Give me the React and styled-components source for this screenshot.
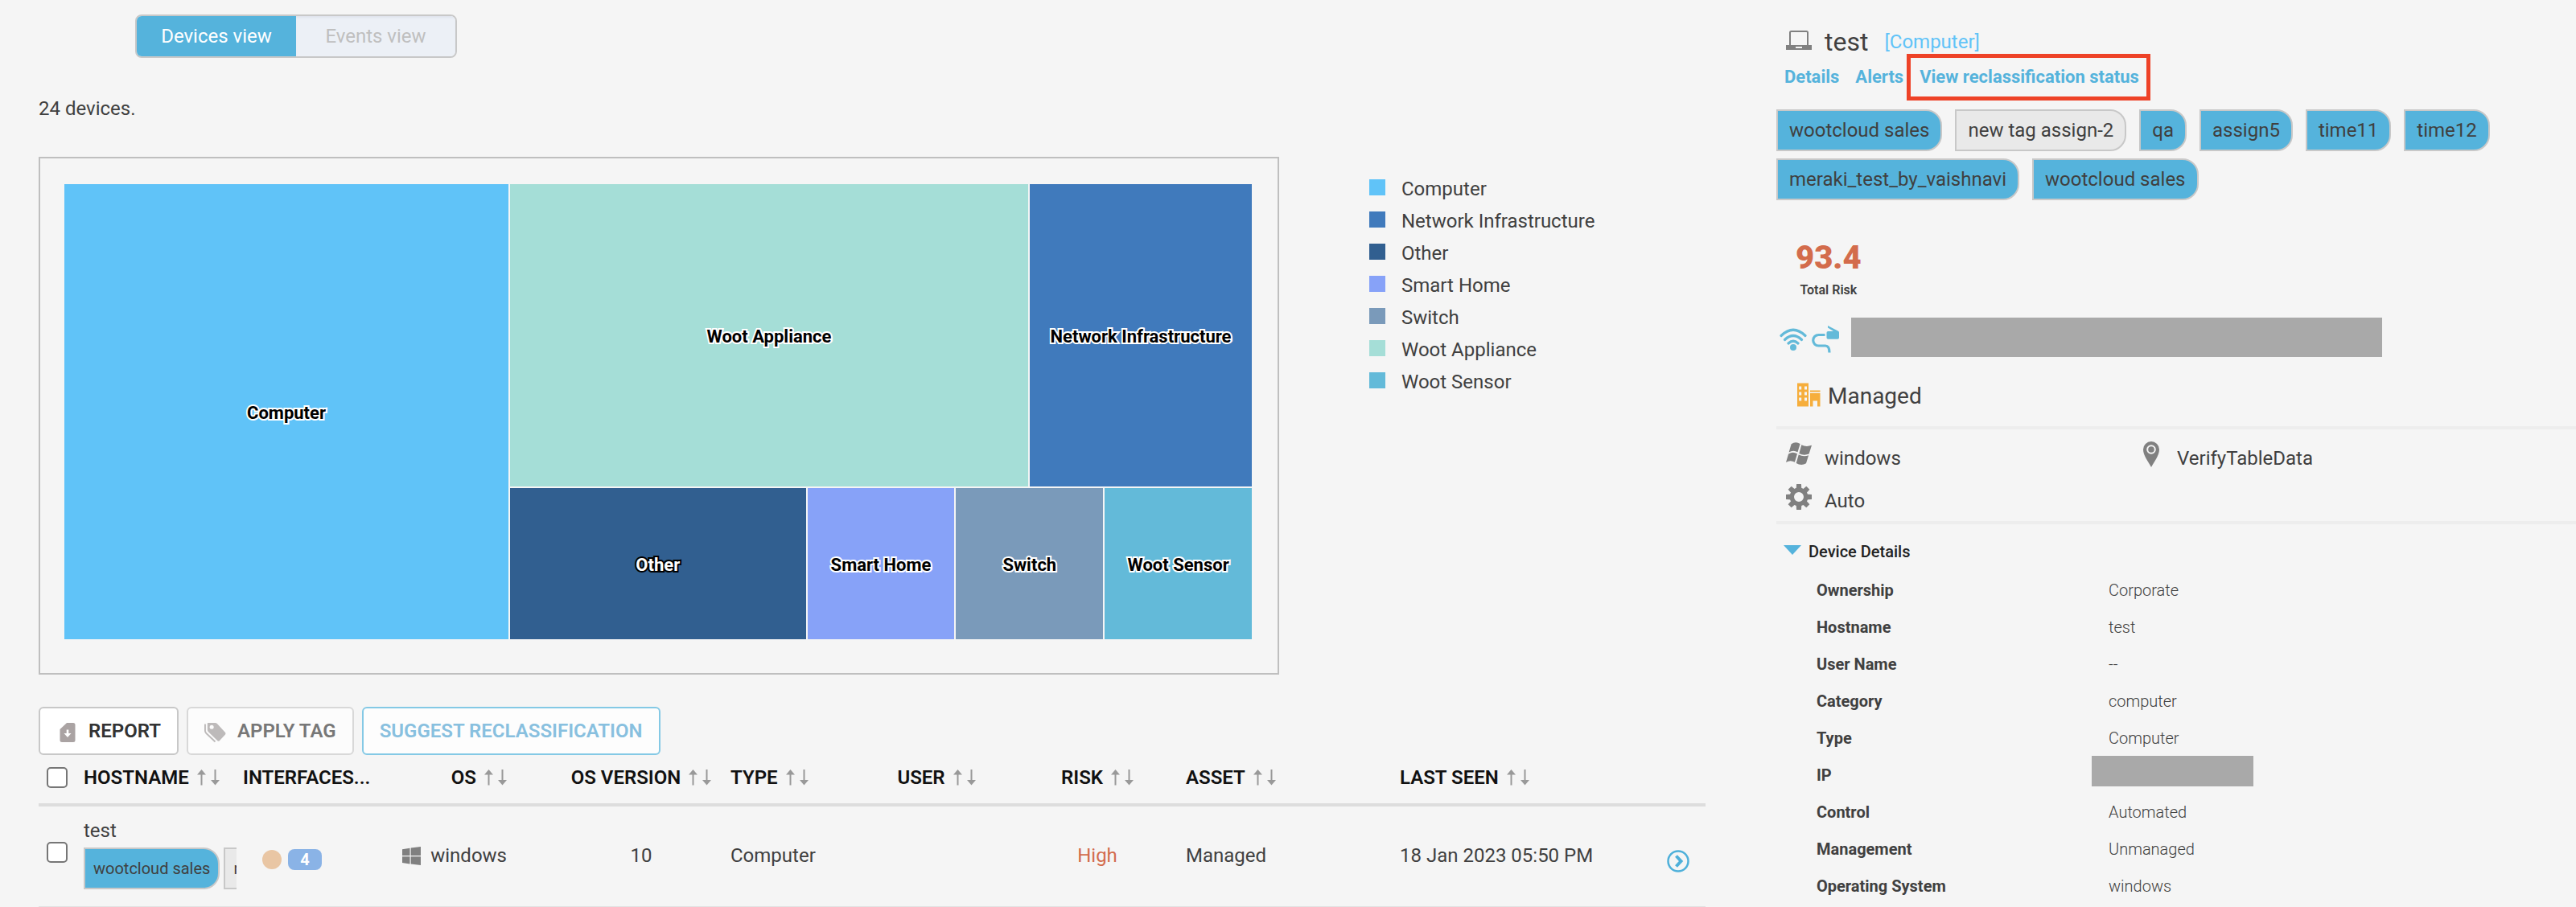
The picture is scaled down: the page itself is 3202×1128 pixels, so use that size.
import React from "react";
import styled, { createGlobalStyle } from "styled-components";

const Global = createGlobalStyle`
  *, *::before, *::after { box-sizing: border-box; }
  body {
    margin: 0;
    background: #f5f5f5;
    color: #404040;
    font-family: Roboto, "Liberation Sans", sans-serif;
    font-size: 24px;
    line-height: 28px;
  }
  button, input { font: inherit; }
  svg { display: block; flex: none; }
`;

const Page = styled.div`
  display: grid;
  grid-template-columns: minmax(0, 2208fr) minmax(0, 994fr);
`;

const Main = styled.main`
  padding: 18px 88px 0 48px;
`;

const Toggle = styled.div`
  display: flex;
  width: fit-content;
  margin-left: 120px;
  height: 54px;
  border: 2px solid #c8c8c8;
  border-radius: 8px;
  overflow: hidden;
`;

const ToggleButton = styled.button`
  width: 198px;
  padding: 0;
  border: 0;
  color: ${(p) => (p.$active ? "#fff" : "#bfbfbf")};
  background: ${(p) => (p.$active ? "#55b3dc" : "#ecf0f6")};
  box-shadow: ${(p) => (p.$active ? "none" : "inset 0 3px 3px -1px #dfe3ec")};
`;

const Count = styled.p`
  margin: 49px 0 46px;
`;

const ChartRow = styled.div`
  display: flex;
  gap: 112px;
  align-items: flex-start;
`;

const ChartFrame = styled.div`
  flex: 1;
  min-width: 0;
  padding: 32px 32px 42px 30px;
  border: 2px solid #bfbfbf;
`;

const Treemap = styled.div`
  display: flex;
  gap: 2px;
  height: 566px;
`;

const Stack = styled.div`
  display: flex;
  flex-direction: column;
  gap: 2px;
  flex: 922 1 0;
  min-width: 0;
`;

const Band = styled.div`
  display: flex;
  gap: 2px;
  flex: ${(p) => p.$size} 1 0;
`;

const Cell = styled.div`
  display: flex;
  align-items: center;
  justify-content: center;
  flex: ${(p) => p.$size} 1 0;
  min-width: 0;
  padding-top: 4px;
  background: ${(p) => p.$color};
`;

const CellLabel = styled.span`
  color: ${(p) => (p.$inverse ? "#fff" : "#000")};
  font-size: 22px;
  font-weight: 700;
  white-space: nowrap;
  paint-order: stroke fill;
  -webkit-text-stroke: 4px ${(p) => (p.$inverse ? "#000" : "#fff")};
`;

const Legend = styled.ul`
  width: 418px;
  margin: 26px 0 0;
  padding: 0;
  list-style: none;
`;

const LegendItem = styled.li`
  display: flex;
  gap: 20px;
  height: 40px;
`;

const Swatch = styled.span`
  width: 20px;
  height: 20px;
  margin-top: 2px;
  background: ${(p) => p.$color};
`;

const Actions = styled.div`
  display: flex;
  gap: 10px;
  margin-top: 40px;
`;

const variants = {
  solid: "color:#333; background:#fff; border-color:#c8c8c8;",
  muted: "color:#777; background:#fcfcfc; border-color:#d8d8d8;",
  outline: "color:#88c0df; background:#fdfdfd; border-color:#84c9e5;",
};

const ActionButton = styled.button`
  display: flex;
  align-items: center;
  gap: 14px;
  height: 60px;
  padding: 0 20px;
  border: 2px solid;
  border-radius: 6px;
  font-weight: 600;
  white-space: nowrap;
  ${(p) => variants[p.$variant]}
  svg { margin-top: 4px; }
`;

const Table = styled.table`
  width: 100%;
  margin-top: 2px;
  table-layout: fixed;
  border-collapse: separate;
  border-spacing: 0;
`;

const Th = styled.th`
  height: 62px;
  padding: 0 ${(p) => p.$right || 0}px 6px 0;
  border-bottom: 4px solid #ddd;
  color: #111;
  font-weight: 600;
  text-align: ${(p) => p.$align || "left"};
  white-space: nowrap;
`;

const Td = styled.td`
  height: 125px;
  padding: 0 ${(p) => p.$right || 0}px ${(p) => p.$bottom || 0}px 0;
  border-bottom: 1px solid #e2e2e2;
  text-align: ${(p) => p.$align || "left"};
  color: ${(p) => p.$color || "inherit"};
  white-space: nowrap;
`;

const HeadLabel = styled.span`
  display: inline-flex;
  align-items: center;
  gap: 10px;
`;

const Check = styled.input`
  appearance: none;
  display: block;
  width: 26px;
  height: 26px;
  margin: 0 0 0 10px;
  border: 2px solid #767676;
  border-radius: 5px;
  background: #fff;
`;

const HostCell = styled.div`
  width: 190px;
  overflow: hidden;
`;

const HostTags = styled.div`
  display: flex;
  gap: 5px;
  margin-top: 7px;
`;

const Tag = styled.span`
  flex: none;
  height: 52px;
  padding: 0 ${(p) => (p.$small ? 10 : 14)}px;
  border: 2px solid #c8c8c8;
  border-radius: 0 20px 20px 0;
  background: ${(p) => (p.$plain ? "#e9e9e9" : "#55b3dc")};
  font-size: ${(p) => (p.$small ? 20 : 24)}px;
  line-height: 48px;
`;

const Inline = styled.div`
  display: flex;
  align-items: center;
  justify-content: ${(p) => (p.$end ? "flex-end" : "flex-start")};
  gap: ${(p) => p.$gap}px;
  padding: ${(p) => p.$top || 0}px 0 0 ${(p) => p.$indent || 0}px;
`;

const Dot = styled.span`
  width: 24px;
  height: 24px;
  border-radius: 50%;
  background: #e9c6a4;
`;

const Badge = styled.span`
  width: 42px;
  height: 26px;
  border-radius: 8px;
  background: #8ab3e6;
  color: #fff;
  font-size: 20px;
  font-weight: 700;
  line-height: 27px;
  text-align: center;
`;

const OpenButton = styled.button`
  display: block;
  margin: 12px 0 0 32px;
  padding: 0;
  border: 0;
  background: none;
`;

const Panel = styled.aside`
  padding-top: 32px;
`;

const Title = styled.header`
  display: flex;
  align-items: center;
  height: 35px;
  padding-left: 12px;
`;

const DeviceName = styled.h1`
  margin: 4px 0 0 16px;
  font-size: 32px;
  font-weight: 400;
  line-height: 38px;
`;

const DeviceKind = styled.span`
  margin: 4px 0 0 20px;
  color: #60c3f8;
`;

const Links = styled.nav`
  display: flex;
  height: 58px;
  padding-left: 10px;
`;

const PanelLink = styled.a`
  margin-right: ${(p) => (p.$before ? 4 : 20)}px;
  padding-top: 15px;
  color: #55b3dc;
  font-size: 22px;
  font-weight: 700;
  text-decoration: none;
  white-space: nowrap;
`;

const Marked = styled.div`
  padding: 0 9px 0 11px;
  border: 5px solid #ee4227;
  a { display: block; margin: 0; padding-top: 10px; }
`;

const Tags = styled.div`
  display: flex;
  flex-wrap: wrap;
  gap: 9px 16px;
  margin-top: 11px;
  padding-right: 80px;
`;

const Risk = styled.div`
  display: flex;
  flex-direction: column;
  align-items: center;
  width: fit-content;
  margin: 47px 0 0 24px;
  font-size: 16px;
  font-weight: 600;
  line-height: 20px;
  strong {
    margin-bottom: 5px;
    color: #d36c4c;
    font-size: 40px;
    line-height: 50px;
  }
`;

const Network = styled.div`
  display: flex;
  align-items: center;
  gap: 6px;
  margin-top: 24px;
  padding-left: 4px;
  svg { margin-top: 5px; }
`;

const Redacted = styled.div`
  width: 660px;
  height: 49px;
  margin-left: 9px;
  background: #a9a9a9;
`;

const RedactedValue = styled.div`
  width: 201px;
  height: 38px;
  margin: -4px 0 0 -21px;
  background: #a9a9a9;
`;

const Managed = styled.div`
  display: flex;
  align-items: center;
  gap: 9px;
  height: 90px;
  padding: 12px 0 0 26px;
  border-bottom: 4px solid #ededed;
  font-size: 28px;
  svg { margin-bottom: 4px; }
`;

const Facts = styled.div`
  display: grid;
  grid-template-columns: 438fr 548fr;
  height: 118px;
  padding: 11px 0 0 8px;
  border-bottom: 4px solid #ededed;
`;

const Fact = styled.div`
  display: flex;
  gap: 12px;
  height: 53px;
  padding-top: 10px;
  line-height: 30px;
`;

const FactIcon = styled.span`
  display: flex;
  justify-content: center;
  width: 40px;
  height: 32px;
  margin-top: -6px;
`;

const SectionTitle = styled.button`
  display: flex;
  gap: 9px;
  margin: 20px 0 14px;
  padding: 0 0 0 9px;
  border: 0;
  background: none;
  color: #222;
  font-size: 20px;
  font-weight: 500;
  line-height: 28px;
  svg { margin-top: 6px; }
`;

const Details = styled.dl`
  display: grid;
  grid-template-columns: 363fr 581fr;
  grid-auto-rows: 40px;
  row-gap: 6px;
  margin: 0;
  padding-left: 50px;
  font-size: 20px;
  line-height: 40px;
  dt { font-weight: 700; }
  dd { margin: 0; font-weight: 300; }
`;

const series = [
  ["Computer", "#60c3f8"],
  ["Network Infrastructure", "#407abc"],
  ["Other", "#315f90"],
  ["Smart Home", "#87a2f8"],
  ["Switch", "#7a9aba"],
  ["Woot Appliance", "#a5ded7"],
  ["Woot Sensor", "#63bad9"],
];
const colorOf = Object.fromEntries(series);

const columns = [
  { w: 56 },
  { w: 198, label: "HOSTNAME", sort: true },
  { w: 178, label: "INTERFACES..." },
  { w: 206, label: "OS", sort: true, align: "right", right: 56 },
  { w: 222, label: "OS VERSION", sort: true, align: "center" },
  { w: 166, label: "TYPE", sort: true },
  { w: 180, label: "USER", sort: true, align: "center" },
  { w: 220, label: "RISK", sort: true, align: "center" },
  { w: 266, label: "ASSET", sort: true },
  { w: 300, label: "LAST SEEN", sort: true },
  { w: 80 },
];

const details = [
  ["Ownership", "Corporate"],
  ["Hostname", "test"],
  ["User Name", "--"],
  ["Category", "computer"],
  ["Type", "Computer"],
  ["IP", null],
  ["Control", "Automated"],
  ["Management", "Unmanaged"],
  ["Operating System", "windows"],
];

const Tile = ({ name, size, inverse }) => (
  <Cell $size={size} $color={colorOf[name]}>
    <CellLabel $inverse={inverse}>{name}</CellLabel>
  </Cell>
);

const SortIcon = () => (
  <svg width="28" height="20" viewBox="0 0 28 20" fill="#999">
    <path d="M5.500 0 11 6.500H6.500V19.500H4.500V6.500H0z" />
    <path d="M21.500 0h2v13H28l-5.500 6.500L17 13h4.500z" />
  </svg>
);

const ReportIcon = () => (
  <svg width="26" height="24" viewBox="2 0 26 24">
    <path d="M15 0h8a2.500 2.500 0 0 1 2.500 2.500v19A2.500 2.500 0 0 1 23 24H9a2.500 2.500 0 0 1-2.500-2.500V8z" fill="#aaa3a3" />
    <path d="M14.700 8.500h2.600V13h3.200L16 18l-4.500-5h3.200z" fill="#fff" />
  </svg>
);

const TagIcon = () => (
  <svg width="27" height="26" viewBox="0 0 28 26">
    <path d="M4.500 0.500h9.500q1.500 0 2.500 1L27 13q1 1.200 0 2.500l-7.500 8q-1.300 1.200-2.500 0L5.500 12.500Q4 11 4 9.500V1q0-.5.5-.5z" fill="#bdbaba" />
    <circle cx="9.500" cy="6" r="2.600" fill="#fcfcfc" />
    <path d="M1 2v9q0 1.500 1.500 3L14 25" fill="none" stroke="#bdbaba" strokeWidth="2" />
  </svg>
);

const FlatWindowsIcon = () => (
  <svg width="23" height="23" viewBox="0 0 23 23" fill="#808080">
    <path d="M0 3.200 9.500 1.800V11H0zM10.700 1.600 23 0v11H10.700zM0 12.200h9.500v9.200L0 20zM10.700 12.200H23V23l-12.300-1.500z" />
  </svg>
);

const WavyWindowsIcon = () => (
  <svg width="32" height="30" viewBox="0 -1 32 30" fill="#808080">
    <path d="M6.600 2.200Q12-1.400 17.600 1.900L14.500 12.300Q9 9.100 3.600 12.500zM19.300 3.300Q25 6.200 32 3.800L28.600 14.600Q22 17.200 16.300 14zM3.100 14.500Q8.500 11 14 14.300L10.900 24.800Q5.500 21.700 0 25zM15.700 15.600Q22 18.700 28.100 16.300L25 26.300Q19 29.700 12.700 26z" />
  </svg>
);

const LaptopIcon = () => (
  <svg width="32" height="24" viewBox="0 0 32 24">
    <rect x="5" y="1" width="22" height="18" rx="1.500" fill="none" stroke="#808080" strokeWidth="2" />
    <path d="M0 18h32v6H0z" fill="#808080" />
    <path d="M12 20h8v2h-8z" fill="#f5f5f5" />
  </svg>
);

const OpenIcon = () => (
  <svg width="28" height="28" viewBox="0 0 28 28" fill="none" stroke="#4eb0da">
    <circle cx="14" cy="14" r="12.500" strokeWidth="2.500" />
    <path d="m11.500 7.500 6 6.500-6 6.500" strokeWidth="4" />
  </svg>
);

const WifiIcon = () => (
  <svg width="34" height="28" viewBox="0 0 34 28" fill="none" stroke="#63bad9" strokeWidth="3.200" strokeLinecap="round">
    <path d="M2 9.500Q17-5 32 9.500M6.500 14.500Q17 4.500 27.500 14.500M11 19q6-5.500 12 0" />
    <circle cx="17" cy="24" r="4" fill="#63bad9" stroke="none" />
  </svg>
);

const CableIcon = () => (
  <svg width="34" height="34" viewBox="0 0 34 34">
    <path d="M16.500 11.500H8.500a6.700 6.700 0 0 0 0 13.500h8.500q5 0 5 8.500" fill="none" stroke="#63bad9" strokeWidth="3.200" />
    <path d="M20 0 32.500 6.500Q34 7 34 8.500V15q0 1.800-1.800 1.800H20.300q-1.800 0-1.800-1.800V8.800q0-1.800 1.800-1.800H27L20 2.600z" fill="#63bad9" />
  </svg>
);

const BuildingIcon = () => (
  <svg width="29" height="30" viewBox="0 0 29 30">
    <path fill="#f6ae3c" fillRule="evenodd" d="M0 .5h14V29.500H0zM2.200 4.500v4h3v-4zM9 4.500v4h3v-4zM2.200 11.500v4h3v-4zM9 11.500v4h3v-4zM2.200 18.500v4h3v-4zM9 18.500v4h3v-4zM16 9.500h12.500v2H16zM16 13h12.500v16.500h-3.500v-7h-5.500v7H16z" />
  </svg>
);

const PinIcon = () => (
  <svg width="20" height="32" viewBox="0 0 20 32">
    <path d="M10 0a10 10 0 0 1 10 10C20 17 14 25 10 32 6 25 0 17 0 10A10 10 0 0 1 10 0z" fill="#808080" />
    <circle cx="10" cy="10" r="4.800" fill="#808080" stroke="#f5f5f5" strokeWidth="2" />
  </svg>
);

const GearIcon = () => (
  <svg width="32" height="32" viewBox="-16 -16 32 32">
    <circle r="8.700" fill="none" stroke="#808080" strokeWidth="5.400" />
    {[0, 45, 90, 135, 180, 225, 270, 315].map((a) => (
      <path key={a} d="M-3.400-9-2.900-16H2.900L3.400-9z" fill="#808080" transform={`rotate(${a})`} />
    ))}
  </svg>
);

export default function App() {
  return (
    <>
      <Global />
      <Page>
        <Main>
          <Toggle>
            <ToggleButton $active>Devices view</ToggleButton>
            <ToggleButton>Events view</ToggleButton>
          </Toggle>
          <Count>24 devices.</Count>
          <ChartRow>
            <ChartFrame>
              <Treemap>
                <Tile name="Computer" size={552} />
                <Stack>
                  <Band $size={376}>
                    <Tile name="Woot Appliance" size={644} />
                    <Tile name="Network Infrastructure" size={276} />
                  </Band>
                  <Band $size={188}>
                    <Tile name="Other" size={368} inverse />
                    <Tile name="Smart Home" size={183} />
                    <Tile name="Switch" size={183} />
                    <Tile name="Woot Sensor" size={183} />
                  </Band>
                </Stack>
              </Treemap>
            </ChartFrame>
            <Legend>
              {series.map(([name, color]) => (
                <LegendItem key={name}>
                  <Swatch $color={color} />
                  {name}
                </LegendItem>
              ))}
            </Legend>
          </ChartRow>
          <Actions>
            <ActionButton $variant="solid"><ReportIcon />REPORT</ActionButton>
            <ActionButton $variant="muted"><TagIcon />APPLY TAG</ActionButton>
            <ActionButton $variant="outline">SUGGEST RECLASSIFICATION</ActionButton>
          </Actions>
          <Table>
            <colgroup>
              {columns.map((c, i) => <col key={i} width={c.w} />)}
            </colgroup>
            <thead>
              <tr>
                {columns.map((c, i) => (
                  <Th key={i} $align={c.align} $right={c.right}>
                    {i === 0 && <Check type="checkbox" aria-label="Select all devices" />}
                    {c.label && (
                      <HeadLabel>
                        {c.label}
                        {c.sort && <SortIcon />}
                      </HeadLabel>
                    )}
                  </Th>
                ))}
              </tr>
            </thead>
            <tbody>
              <tr>
                <Td $bottom={10}><Check type="checkbox" aria-label="Select test" /></Td>
                <Td $bottom={6}>
                  <HostCell>
                    test
                    <HostTags>
                      <Tag $small>wootcloud sales</Tag>
                      <Tag $small $plain>new tag assign-2</Tag>
                    </HostTags>
                  </HostCell>
                </Td>
                <Td><Inline $gap={8} $indent={24} $top={8}><Dot /><Badge>4</Badge></Inline></Td>
                <Td $right={56} $bottom={2}><Inline $gap={12} $end><FlatWindowsIcon />windows</Inline></Td>
                <Td $align="center" $bottom={2}>10</Td>
                <Td $bottom={2}>Computer</Td>
                <Td />
                <Td $align="center" $color="#d36c4c" $bottom={2}>High</Td>
                <Td $bottom={2}>Managed</Td>
                <Td $bottom={2}>18 Jan 2023 05:50 PM</Td>
                <Td><OpenButton aria-label="Open device"><OpenIcon /></OpenButton></Td>
              </tr>
            </tbody>
          </Table>
        </Main>
        <Panel>
          <Title>
            <LaptopIcon />
            <DeviceName>test</DeviceName>
            <DeviceKind>[Computer]</DeviceKind>
          </Title>
          <Links>
            <PanelLink href="#details">Details</PanelLink>
            <PanelLink href="#alerts" $before>Alerts</PanelLink>
            <Marked><PanelLink href="#status">View reclassification status</PanelLink></Marked>
          </Links>
          <Tags>
            <Tag>wootcloud sales</Tag>
            <Tag $plain>new tag assign-2</Tag>
            <Tag>qa</Tag>
            <Tag>assign5</Tag>
            <Tag>time11</Tag>
            <Tag>time12</Tag>
            <Tag>meraki_test_by_vaishnavi</Tag>
            <Tag>wootcloud sales</Tag>
          </Tags>
          <Risk><strong>93.4</strong>Total Risk</Risk>
          <Network>
            <WifiIcon />
            <CableIcon />
            <Redacted />
          </Network>
          <Managed><BuildingIcon />Managed</Managed>
          <Facts>
            <Fact><FactIcon><WavyWindowsIcon /></FactIcon>windows</Fact>
            <Fact><FactIcon><PinIcon /></FactIcon>VerifyTableData</Fact>
            <Fact><FactIcon><GearIcon /></FactIcon>Auto</Fact>
          </Facts>
          <SectionTitle>
            <svg width="22" height="12" viewBox="0 0 22 12"><path d="M0 0h22L11 12z" fill="#55b3dc" /></svg>
            Device Details
          </SectionTitle>
          <Details>
            {details.map(([name, value]) => (
              <React.Fragment key={name}>
                <dt>{name}</dt>
                <dd>{value ?? <RedactedValue />}</dd>
              </React.Fragment>
            ))}
          </Details>
        </Panel>
      </Page>
    </>
  );
}
